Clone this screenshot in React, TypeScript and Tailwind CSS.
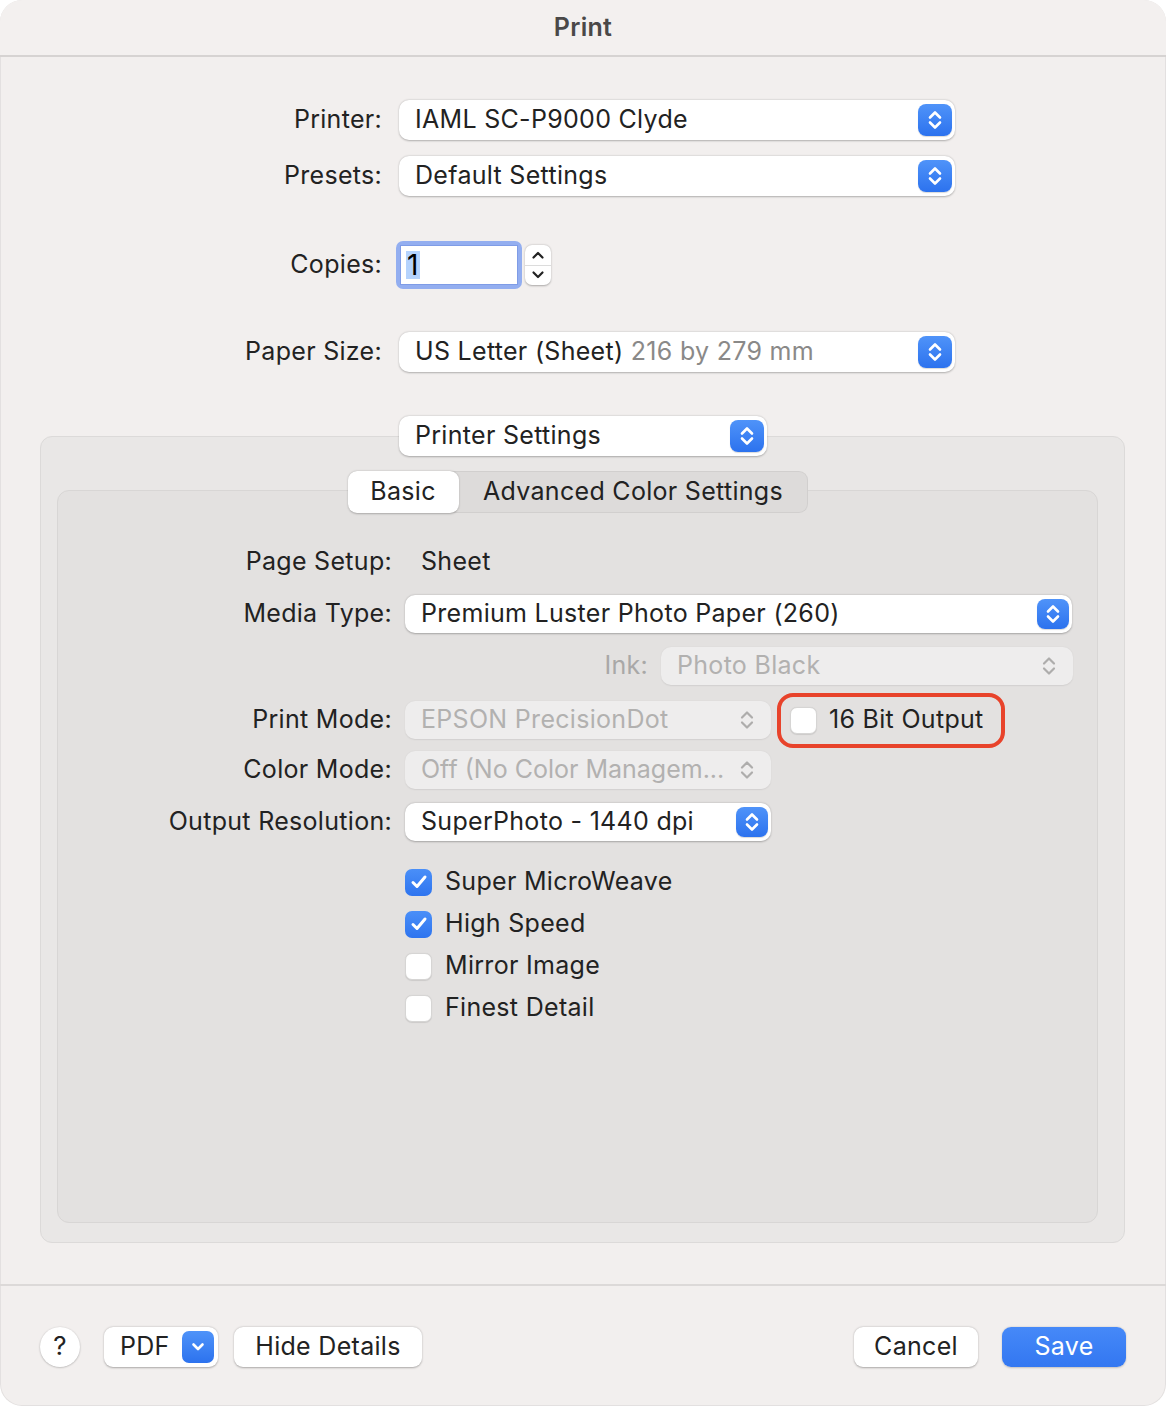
import React from 'react';

const font = { fontFamily: 'Inter, "Helvetica Neue", Arial, sans-serif' };

// blue up/down stepper used on the popups
const BlueStepper = ({ w = 34, h = 32 }: { w?: number; h?: number }) => (
  <div
    className="flex items-center justify-center rounded-[8px] bg-gradient-to-b from-[#4f93f9] to-[#2c72ee] shadow-[0_1px_1px_rgba(0,0,0,0.15)]"
    style={{ width: w, height: h }}
  >
    <svg width="16" height="22" viewBox="0 0 16 22" fill="none">
      <path d="M3 8.5 L8 3.5 L13 8.5" stroke="white" strokeWidth="2.6" strokeLinecap="round" strokeLinejoin="round" />
      <path d="M3 13.5 L8 18.5 L13 13.5" stroke="white" strokeWidth="2.6" strokeLinecap="round" strokeLinejoin="round" />
    </svg>
  </div>
);

const GrayChevrons = () => (
  <svg width="16" height="22" viewBox="0 0 16 22" fill="none">
    <path d="M3 8.5 L8 3.5 L13 8.5" stroke="#aeadac" strokeWidth="2.2" strokeLinecap="round" strokeLinejoin="round" />
    <path d="M3 13.5 L8 18.5 L13 13.5" stroke="#aeadac" strokeWidth="2.2" strokeLinecap="round" strokeLinejoin="round" />
  </svg>
);

interface PopupProps {
  width: number;
  height?: number;
  disabled?: boolean;
  children: React.ReactNode;
}

const Popup: React.FC<PopupProps> = ({ width, height = 40, disabled, children }) => (
  <div
    className={
      disabled
        ? 'flex items-center justify-between rounded-[10px] bg-[#eeeded] pl-[16px] pr-[16px] text-[#b2b1b0] shadow-[0_0.5px_1.5px_rgba(0,0,0,0.08)]'
        : 'flex items-center justify-between rounded-[10px] bg-white pl-[16px] pr-[3px] text-[#222] shadow-[0_0.5px_2px_rgba(0,0,0,0.28)]'
    }
    style={{ width, height }}
  >
    <span className="whitespace-nowrap pb-[2px]">{children}</span>
    {disabled ? <GrayChevrons /> : <BlueStepper h={height - 8} w={height === 40 ? 34 : 32} />}
  </div>
);

const Checkbox = ({ checked }: { checked?: boolean }) =>
  checked ? (
    <div className="flex h-[27px] w-[27px] items-center justify-center rounded-[7px] bg-gradient-to-b from-[#4a8ff8] to-[#2e74ef]">
      <svg width="18" height="16" viewBox="0 0 18 16" fill="none">
        <path d="M3 8.5 L7 12.5 L15 3" stroke="white" strokeWidth="3" strokeLinecap="round" strokeLinejoin="round" />
      </svg>
    </div>
  ) : (
    <div className="h-[27px] w-[27px] rounded-[7px] border border-[#d6d5d4] bg-white shadow-[0_0.5px_1px_rgba(0,0,0,0.1)]" />
  );

const TopRow = ({ label, children }: { label: string; children: React.ReactNode }) => (
  <div className="flex items-center">
    <div className="w-[382px] pb-[2px] text-right text-[#222]">{label}</div>
    <div className="ml-[17px]">{children}</div>
  </div>
);

const InnerRow = ({ label, children }: { label?: string; children: React.ReactNode }) => (
  <div className="flex h-[38px] items-center">
    <div className="w-[334px] pb-[2px] text-right text-[#222]">{label}</div>
    <div className="ml-[13px] flex items-center">{children}</div>
  </div>
);

const CheckRow = ({ checked, label }: { checked?: boolean; label: string }) => (
  <div className="flex h-[42px] items-center">
    <Checkbox checked={checked} />
    <span className="ml-[13px] pb-[2px] text-[#222]">{label}</span>
  </div>
);

const App: React.FC = () => {
  return (
    <div className="h-[1406px] w-[1166px] bg-white text-[25px] leading-none tracking-[0.012em]" style={font}>
      <div className="flex h-full w-full flex-col overflow-hidden rounded-[22px] bg-[#f2efee] shadow-[inset_0_0_0_1px_rgba(0,0,0,0.06)]">
        {/* Title bar */}
        <div className="flex h-[57px] shrink-0 items-center justify-center border-b-2 border-[#d6d3d2] bg-[#f3f0ef]">
          <span className="font-semibold text-[#4a4848]">Print</span>
        </div>

        {/* Printer / presets */}
        <div className="mt-[43px] flex flex-col gap-[16px]">
          <TopRow label="Printer:">
            <Popup width={556}>IAML SC-P9000 Clyde</Popup>
          </TopRow>
          <TopRow label="Presets:">
            <Popup width={556}>Default Settings</Popup>
          </TopRow>
        </div>

        {/* Copies */}
        <div className="mt-[45px]">
          <TopRow label="Copies:">
            <div className="-ml-[3px] flex items-center">
              <div className="h-[48px] w-[126px] rounded-[7px] bg-[#93aef0] p-[4px]">
                <div className="flex h-full w-full items-center border border-[#7f9ce6] bg-white pl-[5px]">
                  <span className="bg-[#b5d3fd] px-[1px] text-[28px] text-black">1</span>
                </div>
              </div>
              <div className="ml-[3px] flex h-[40px] w-[26px] flex-col rounded-[7px] bg-white shadow-[0_0.5px_2px_rgba(0,0,0,0.3)]">
                <div className="flex flex-1 items-center justify-center border-b border-[#dcdcdc]">
                  <svg width="14" height="10" viewBox="0 0 14 10" fill="none">
                    <path d="M2.5 7.5 L7 3 L11.5 7.5" stroke="#222" strokeWidth="2.2" strokeLinecap="round" strokeLinejoin="round" />
                  </svg>
                </div>
                <div className="flex flex-1 items-center justify-center">
                  <svg width="14" height="10" viewBox="0 0 14 10" fill="none">
                    <path d="M2.5 2.5 L7 7 L11.5 2.5" stroke="#222" strokeWidth="2.2" strokeLinecap="round" strokeLinejoin="round" />
                  </svg>
                </div>
              </div>
            </div>
          </TopRow>
        </div>

        {/* Paper size */}
        <div className="mt-[43px]">
          <TopRow label="Paper Size:">
            <Popup width={556}>
              US Letter (Sheet) <span className="text-[#8a8988]">216 by 279 mm</span>
            </Popup>
          </TopRow>
        </div>

        {/* Printer settings panel */}
        <div className="ml-[40px] mr-[41px] mt-[44px] flex flex-col">
          <div className="relative z-10 ml-[359px]">
            <Popup width={368}>Printer Settings</Popup>
          </div>
          <div className="-mt-[20px] flex h-[807px] flex-col rounded-[12px] border border-[#dcdad9] bg-[#e9e7e6] pb-[19px] pl-[16px] pr-[26px] pt-[34px]">
            {/* Tabs */}
            <div className="relative z-10 flex justify-center">
              <div className="flex h-[42px] rounded-[9px] bg-[#dddbda] shadow-[inset_0_0_0_1px_rgba(0,0,0,0.05)]">
                <div className="flex w-[111px] items-center justify-center rounded-[9px] bg-white pb-[2px] text-[#222] shadow-[0_0.5px_2px_rgba(0,0,0,0.25)]">
                  Basic
                </div>
                <div className="flex w-[349px] items-center justify-center pb-[2px] text-[#222]">Advanced Color Settings</div>
              </div>
            </div>
            <div className="-mt-[23px] flex flex-1 flex-col rounded-[12px] border border-[#d8d6d5] bg-[#e3e1e0] pt-[52px]">
              <div className="flex h-[38px] items-center pb-[2px]">
                <div className="w-[334px] text-right text-[#222]">Page Setup:</div>
                <div className="ml-[29px] text-[#222]">Sheet</div>
              </div>
              <div className="mt-[14px] flex flex-col">
                <InnerRow label="Media Type:">
                  <Popup width={667} height={38}>
                    Premium Luster Photo Paper (260)
                  </Popup>
                </InnerRow>
                <div className="mt-[14px] flex h-[38px] items-center">
                  <div className="w-[590px] pb-[2px] text-right text-[#a9a8a7]">Ink:</div>
                  <div className="ml-[13px]">
                    <Popup width={412} height={38} disabled>
                      Photo Black
                    </Popup>
                  </div>
                </div>
                <div className="mt-[16px]">
                  <InnerRow label="Print Mode:">
                    <Popup width={366} height={38} disabled>
                      EPSON PrecisionDot
                    </Popup>
                    <div className="ml-[6px] flex h-[55px] w-[228px] items-center rounded-[16px] border-[4px] border-[#e8432b] pl-[9px]">
                      <Checkbox />
                      <span className="ml-[12px] pb-[2px] text-[#222]">16 Bit Output</span>
                    </div>
                  </InnerRow>
                </div>
                <div className="mt-[12px]">
                  <InnerRow label="Color Mode:">
                    <Popup width={366} height={38} disabled>
                      <span className="tracking-normal">Off (No Color Managem...</span>
                    </Popup>
                  </InnerRow>
                </div>
                <div className="mt-[14px]">
                  <InnerRow label="Output Resolution:">
                    <Popup width={366} height={38}>
                      SuperPhoto - 1440 dpi
                    </Popup>
                  </InnerRow>
                </div>
              </div>
              <div className="ml-[347px] mt-[20px] flex flex-col">
                <CheckRow checked label="Super MicroWeave" />
                <CheckRow checked label="High Speed" />
                <CheckRow label="Mirror Image" />
                <CheckRow label="Finest Detail" />
              </div>
            </div>
          </div>
        </div>

        {/* Bottom bar */}
        <div className="mt-[41px] border-t-2 border-[#dcd9d8]" />
        <div className="mt-[41px] flex items-center px-[40px]">
          <div className="flex h-[40px] w-[40px] items-center justify-center rounded-full bg-white pb-[2px] text-[26px] text-[#222] shadow-[0_0.5px_2px_rgba(0,0,0,0.3)]">
            ?
          </div>
          <div className="ml-[24px] flex h-[40px] w-[114px] items-center justify-between rounded-[9px] bg-white pl-[16px] pr-[4px] text-[#222] shadow-[0_0.5px_2px_rgba(0,0,0,0.3)]">
            <span className="pb-[2px]">PDF</span>
            <div className="flex h-[32px] w-[32px] items-center justify-center rounded-[7px] bg-gradient-to-b from-[#4f93f9] to-[#2c72ee]">
              <svg width="16" height="12" viewBox="0 0 16 12" fill="none">
                <path d="M3.5 3.5 L8 8 L12.5 3.5" stroke="white" strokeWidth="2.6" strokeLinecap="round" strokeLinejoin="round" />
              </svg>
            </div>
          </div>
          <div className="ml-[16px] flex h-[40px] w-[188px] items-center justify-center rounded-[9px] bg-white pb-[2px] text-[#222] shadow-[0_0.5px_2px_rgba(0,0,0,0.3)]">
            Hide Details
          </div>
          <div className="flex-1" />
          <div className="flex h-[40px] w-[124px] items-center justify-center rounded-[9px] bg-white pb-[2px] text-[#222] shadow-[0_0.5px_2px_rgba(0,0,0,0.3)]">
            Cancel
          </div>
          <div className="ml-[24px] flex h-[40px] w-[124px] items-center justify-center rounded-[9px] bg-gradient-to-b from-[#4689f8] to-[#3377f1] pb-[2px] text-white shadow-[0_0.5px_2px_rgba(0,0,0,0.2)]">
            Save
          </div>
        </div>
      </div>
    </div>
  );
};

export default App;
